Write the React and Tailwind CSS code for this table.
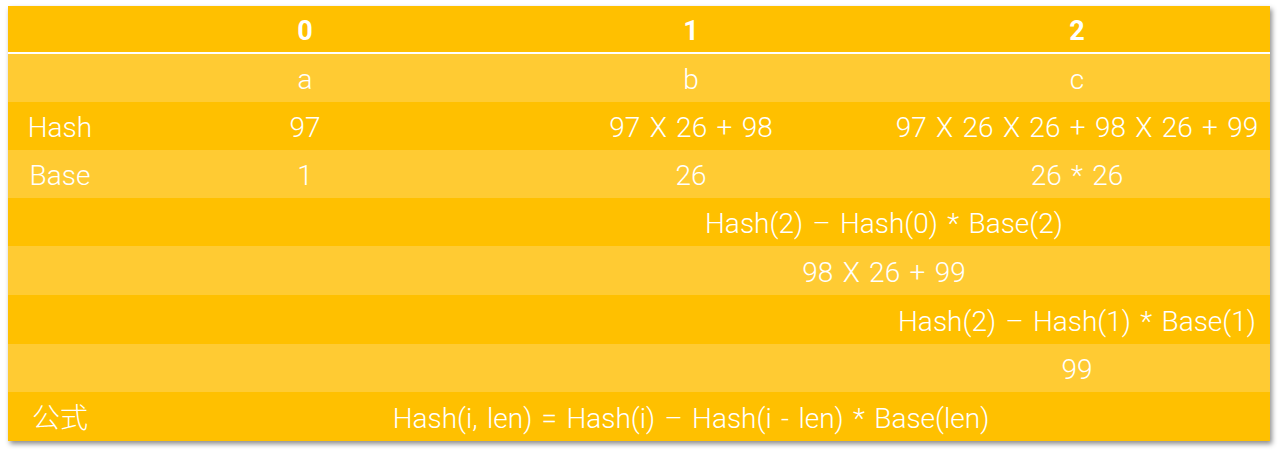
import React from "react";

const dark = "bg-[#ffc000]";
const light = "bg-[#ffcb33]";

const rows = [
  { bg: light, h: "h-[48px]", cells: [["", 1], ["a", 1], ["b", 1], ["c", 1]] },
  { bg: dark, h: "h-[48px]", cells: [["Hash", 1], ["97", 1], ["97 X 26 + 98", 1], ["97 X 26 X 26 + 98 X 26 + 99", 1]] },
  { bg: light, h: "h-[48px]", cells: [["Base", 1], ["1", 1], ["26", 1], ["26 * 26", 1]] },
  { bg: dark, h: "h-[48px]", cells: [["", 1], ["", 1], ["Hash(2) – Hash(0) * Base(2)", 2]] },
  { bg: light, h: "h-[49px]", cells: [["", 1], ["", 1], ["98 X 26 + 99", 2]] },
  { bg: dark, h: "h-[49px]", cells: [["", 1], ["", 1], ["", 1], ["Hash(2) – Hash(1) * Base(1)", 1]] },
  { bg: light, h: "h-[48px]", cells: [["", 1], ["", 1], ["", 1], ["99", 1]] },
  { bg: dark, h: "h-[49px]", cells: [["公式", 1], ["Hash(i, len) = Hash(i) – Hash(i - len) * Base(len)", 3]] },
];

const spanClass = { 1: "col-span-1", 2: "col-span-2", 3: "col-span-3" };

export default function App() {
  return (
    <div className="w-[1280px] h-[453px] bg-white pt-[6px] pl-[8px]">
      <div
        className="w-[1262px] grid grid-cols-[104px_386px_386px_386px] text-white text-[28px] font-light [word-spacing:2.5px] shadow-[2px_3px_5px_rgba(0,0,0,0.45)]"
        style={{ fontFamily: 'Roboto, "Noto Sans CJK SC", sans-serif' }}
      >
        {["", "0", "1", "2"].map((t, i) => (
          <div
            key={i}
            className={`${dark} h-[48px] pt-[4px] border-b-2 border-white flex items-center justify-center font-bold text-[27px]`}
          >
            {t}
          </div>
        ))}
        {rows.map((r, ri) =>
          r.cells.map(([t, span], ci) => (
            <div
              key={`${ri}-${ci}`}
              className={`${r.bg} ${r.h} ${spanClass[span]} pt-[4px] flex items-center justify-center whitespace-nowrap`}
            >
              {t}
            </div>
          ))
        )}
      </div>
    </div>
  );
}
